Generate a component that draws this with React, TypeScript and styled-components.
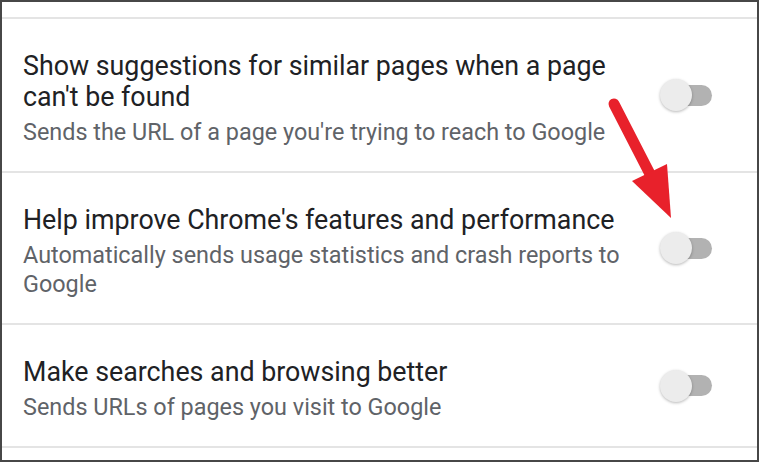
import styled, { createGlobalStyle } from "styled-components";

const GlobalStyle = createGlobalStyle`
    html, body {
        margin: 0;
        padding: 0;
        background: white;
    }
    body {
        font-family: Roboto, "Liberation Sans", sans-serif;
    }
`;

interface Setting {
    title: string
    summary: string
}

const settings: Setting[] = [
    {
        title: "Show suggestions for similar pages when a page can't be found",
        summary: "Sends the URL of a page you're trying to reach to Google",
    },
    {
        title: "Help improve Chrome's features and performance",
        summary: "Automatically sends usage statistics and crash reports to Google",
    },
    {
        title: "Make searches and browsing better",
        summary: "Sends URLs of pages you visit to Google",
    },
];

export default function App() {
    return (
        <>
            <GlobalStyle />
            <Frame>
                <TopGap />
                {settings.map(s => (
                    <Row key={s.title}>
                        <Text>
                            <Title>{s.title}</Title>
                            <Summary>{s.summary}</Summary>
                        </Text>
                        <Switch>
                            <Track />
                            <Thumb />
                        </Switch>
                    </Row>
                ))}
                <BottomGap />
                <Arrow width="759" height="462" viewBox="0 0 759 462">
                    <line x1="614" y1="104" x2="651" y2="176" stroke="#e8212b" strokeWidth="11" strokeLinecap="round" />
                    <polygon points="632,181 667,164 671,218" fill="#e8212b" />
                </Arrow>
            </Frame>
        </>
    );
}

const Frame = styled.div`
    position: relative;
    box-sizing: border-box;
    width: 759px;
    height: 462px;
    border: 2px solid #474747;
    background: white;
    display: flex;
    flex-direction: column;
    overflow: hidden;
`;

const TopGap = styled.div`
    height: 15px;
    border-bottom: 2px solid #e4e4e4;
`;

const BottomGap = styled.div`
    flex: 1;
`;

const Row = styled.div`
    display: flex;
    align-items: center;
    padding: 32px 45px 24px 21px;
    border-bottom: 2px solid #e4e4e4;
`;

const Text = styled.div`
    flex: 1;
    padding-right: 30px;
`;

const Title = styled.div`
    font-size: 26.8px;
    line-height: 31px;
    color: #202124;
`;

const Summary = styled.div`
    margin-top: 5px;
    font-size: 23.4px;
    line-height: 29px;
    color: #5f6368;
`;

const Switch = styled.div`
    position: relative;
    width: 52px;
    height: 32px;
    margin-bottom: 8px;
    display: flex;
    align-items: center;
    justify-content: flex-end;
    flex-shrink: 0;
`;

const Track = styled.div`
    width: 46px;
    height: 21px;
    border-radius: 11px;
    background: #b2b2b2;
`;

const Thumb = styled.div`
    position: absolute;
    left: 0;
    top: 0;
    width: 32px;
    height: 32px;
    border-radius: 50%;
    background: #ececec;
    box-shadow: 0 1px 3px rgba(0, 0, 0, 0.28);
`;

const Arrow = styled.svg`
    position: absolute;
    left: -2px;
    top: -2px;
    pointer-events: none;
`;
